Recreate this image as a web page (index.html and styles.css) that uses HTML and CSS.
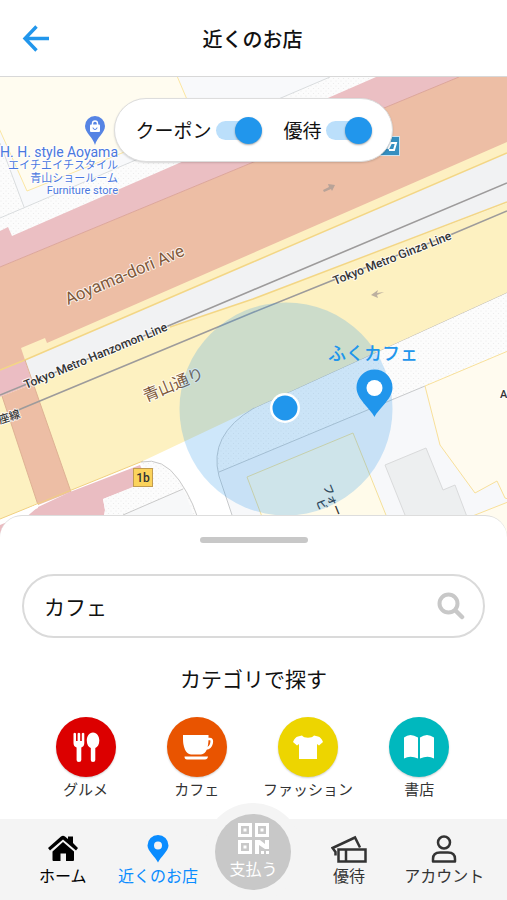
FILE: index.html
```html
<!DOCTYPE html>
<html lang="ja">
<head>
<meta charset="utf-8">
<meta name="viewport" content="width=device-width, initial-scale=1">
<title>近くのお店</title>
<link rel="stylesheet" href="styles.css">
</head>
<body>
<div class="app">
  <header class="header">
    <button class="back" type="button" aria-label="戻る">
      <svg viewBox="0 0 28 28" width="28" height="28"><path d="M14.500 2.500 3 14.500l11.500 12M3.500 14.500H27" fill="none" stroke="#2196ec" stroke-width="3.400"/></svg>
    </button>
    <h1 class="title">近くのお店</h1>
  </header>

  <main class="map">
    <svg class="map-art" viewBox="0 77 507 460" preserveAspectRatio="xMidYMin slice">
      <defs>
        <pattern id="dots" width="5" height="5" patternUnits="userSpaceOnUse">
          <rect width="5" height="5" fill="#fcfcfc"/>
          <circle cx="1" cy="1" r=".6" fill="#ebebeb"/><circle cx="3.500" cy="3.500" r=".6" fill="#ebebeb"/>
        </pattern>
      </defs>
      <rect y="77" width="507" height="460" fill="#fff"/>
      <!-- north-west blocks -->
      <path d="M0 77H376L0 245Z" fill="url(#dots)"/>
      <path d="M0 77H330L24 207 0 143Z" fill="#f8f9fb"/>
      <path d="M0 218 330 77M0 143 24 207" fill="none" stroke="#d9dcde"/>
      <path d="M-2 76H177L197 123 27 191-2 126Z" fill="#fffcf0" stroke="#fbe6a2"/>
      <!-- avenue -->
      <path d="M0 231 8 227 12 236 376 77H460L0 267Z" fill="#ebbfc3"/>
      <path d="M0 267 459 77H507V150L250 258 24 362 0 371Z" fill="#edbea5"/>
      <path d="M0 267 459 77" stroke="#dca69b"/>
      <path d="M0 370 25 360 33 384 0 397Z" fill="#ebbdc3"/>
      <path d="M21 348 45 338 47 343 253 253 507 142V153L253 262 25 360Z" fill="#fdf0c2"/>
      <!-- rail corridor -->
      <path d="M25 360 253 262 507 153V203L253 299 170 327 34 388Z" fill="#f1f2f3"/>
      <path d="M0 397 33 384 170 327 253 299 507 203V293L253 409 143 461 0 519Z" fill="#fdf1c1"/>
      <path d="M0 370 25 360 253 262 507 153M507 202 253 299 170 327" fill="none" stroke="#f3d685" stroke-width="1.500"/>
      <path d="M2 396 33 384 25 360 71 492 38 505Z" fill="#edbea5"/>
      <path d="M25 360 71 492M2 396 38 505" stroke="#dfb294"/>
      <path d="M0 395 168 326 253 290 507 183M0 418 23 408 254 312 331 281 450 235 507 211" fill="none" stroke="#9d9b9b" stroke-width="1.600"/>
      <path d="M0 519 143 461" stroke="#f0d080"/>
      <path d="M253 409 507 293" stroke="#bdb8ae"/>
      <!-- station entrance -->
      <path d="M38 507 70 492 140 465 148 482 103 499 105 510 102 525H17Z" fill="#eabdc2"/>
      <path d="M0 522 38 504 38 508 22 515 0 524Z" fill="#fff"/>
      <path d="M0 525 12 520 0 534Z" fill="#eabdc2"/>
      <path d="M141 463Q163 457 179 480T203 537H102L105 510 103 499 150 480Z" fill="url(#dots)"/>
      <path d="M123 515 183 489Q193 510 200 537H90Z" fill="#f7f8f9"/>
      <path d="M123 515 183 489M141 462Q163 457 179 480T201 530" fill="none" stroke="#c9c9c9"/>
      <!-- south-east blocks -->
      <path d="M253 409 507 293V352L425 386 219 472Q211 435 253 409Z" fill="url(#dots)"/>
      <path d="M219 472 425 386 507 352V537H238Z" fill="#f7f8fa"/>
      <path d="M254 408Q208 435 219 476L237 530M219 472 425 386" fill="none" stroke="#c7c9cb"/>
      <path d="M247 477 353 433 392 530H267Z" fill="#fffbea" stroke="#f4e09a"/>
      <path d="M425 386 508 351V499L505 498 497 481 475 493 440 445Z" fill="#fffbef" stroke="#f8e09a"/>
      <path d="M470 517 508 502V537Z" fill="#fffbef" stroke="#f8e09a"/>
      <path d="M385 465 426 448 443 490 455 485 472 530H411Z" fill="#edeff0" stroke="#d9dadb"/>
      <!-- direction arrows -->
      <path d="M323 190 329 187 328 184 335 185 332 191 331 189 324 192ZM384 292 377 293 378 290 371 295 378 298 377 295Z" fill="#a69a94" opacity=".75"/>
      <!-- road and line names -->
      <g class="halo">
        <text class="road" transform="translate(68 305) rotate(-23)" font-size="17">Aoyama-dori Ave</text>
        <text class="line" transform="translate(26 389) rotate(-22.500)" font-size="12">Tokyo Metro Hanzomon Line</text>
        <text class="line" transform="translate(335 285) rotate(-21.500)" font-size="12">Tokyo Metro Ginza Line</text>
        <text class="road" transform="translate(146 402) rotate(-22.500)" font-size="16">青山通り</text>
        <text class="line" transform="translate(0 424) rotate(-18)" font-size="11">座線</text>
        <text class="line" x="500" y="398" font-size="11">A</text>
      </g>
      <text class="line" transform="translate(323 486) rotate(68)" font-size="11">フォー</text>
      <text class="line" transform="translate(316 501) rotate(68)" font-size="11">ビ</text>
      <!-- station exit -->
      <rect x="133.500" y="468.500" width="19" height="18" fill="#fbd35c" stroke="#c29c50"/>
      <text x="143" y="482" text-anchor="middle" class="line" font-size="12">1b</text>
      <rect x="379.500" y="136.500" width="20" height="19" fill="#358fc0" stroke="#cfe2ed"/>
      <path d="M388 149 391 143H396L394 150H389" fill="none" stroke="#fff" stroke-width="2"/>
      <!-- shop marker -->
      <path d="M95 145C93 137 85 133 85 126A10 10 0 0 1 105 126C105 133 97 137 95 145Z" fill="#5684e4"/>
      <rect x="90" y="124.500" width="10" height="7.500" rx="1" fill="#fff"/>
      <path d="M92.500 125V123.500A2.500 2.500 0 0 1 97.500 123.500V125" fill="none" stroke="#fff" stroke-width="1.400"/>
      <path d="M93 127.500A2 2 0 0 0 97 127.500" fill="none" stroke="#5684e4"/>
      <g class="halo poi" text-anchor="end">
        <text x="118" y="157" font-size="14">H. H. style Aoyama</text>
        <text x="118" y="169" font-size="11">エイチエイチスタイル</text>
        <text x="118" y="182" font-size="11">青山ショールーム</text>
        <text x="118" y="194" font-size="11">Furniture store</text>
      </g>
      <!-- current position -->
      <circle cx="286" cy="409" r="106.500" fill="#2b96e8" opacity=".23"/>
      <circle cx="285" cy="408" r="15" fill="#fff"/>
      <circle cx="285" cy="408" r="12.500" fill="#2196ec"/>
      <path d="M374.500 417C370 408 356.500 399 356.500 387.500A18 18 0 0 1 392.500 387.500C392.500 399 379 408 374.500 417Z" fill="#2196ec"/>
      <circle cx="374.500" cy="388" r="8" fill="#fff"/>
      <text class="shop" x="373" y="360" text-anchor="middle" font-size="18">ふくカフェ</text>
    </svg>
    <div class="filters">
      <label class="filter">クーポン<input class="switch" type="checkbox" role="switch" checked></label>
      <label class="filter">優待<input class="switch" type="checkbox" role="switch" checked></label>
    </div>
  </main>

  <section class="sheet">
    <div class="handle"></div>
    <form class="search">
      <input class="search-input" type="text" value="カフェ" aria-label="お店を検索">
      <button class="search-button" type="button" aria-label="検索">
        <svg viewBox="0 0 28 28" width="28" height="28"><circle cx="11.500" cy="11.500" r="9" fill="none" stroke="#c8c8c8" stroke-width="4"/><path d="M18.500 18.500 25 25" stroke="#c8c8c8" stroke-width="4.500" stroke-linecap="round"/></svg>
      </button>
    </form>
    <h2 class="subtitle">カテゴリで探す</h2>
    <div class="categories">
      <a class="category" href="#gourmet">
        <span class="disc gourmet"><svg viewBox="0 0 60 60" width="60" height="60" fill="#fff"><path d="M17.500 16.500Q18.700 15 20 16.500V24H21.600V16.500Q22.900 15 24.200 16.500V24H25.800V16.500Q27.100 15 28.300 16.500V26Q28.300 29.500 25.300 30.500V43Q25.300 45 22.900 45T20.600 43V30.500Q17.500 29.500 17.500 26Z"/><path d="M37 15.500C41 15.500 43.300 19.500 43.300 23.500 43.300 27.500 41.600 30 39.300 31V43Q39.300 45 37 45T34.800 43V31C32.500 30 30.800 27.500 30.800 23.500 30.800 19.500 33 15.500 37 15.500Z"/></svg></span>
        グルメ
      </a>
      <a class="category" href="#cafe">
        <span class="disc cafe"><svg viewBox="0 0 60 60" width="60" height="60"><path d="M16 18H41.500V22C41.500 29 39.500 37.500 34 37.500H24C18.500 37.500 16 29 16 22Z" fill="#fff"/><path d="M41 22H43Q45.500 22 44.500 26.500 43.500 31 39 31.500" fill="none" stroke="#fff" stroke-width="2.700"/><path d="M17.500 39.500H41Q40.500 42.500 38 42.500H20Q17.500 42.500 17.500 39.500Z" fill="#fff"/></svg></span>
        カフェ
      </a>
      <a class="category" href="#fashion">
        <span class="disc fashion"><svg viewBox="0 0 60 60" width="60" height="60"><path d="M24 18.500C26 21.500 34 21.500 36 18.500L40 19.500Q43 20 45 25L41 28.500 39 27V42H21V27L19 28.500 15 25Q17 20 20 19.500Z" fill="#fff"/></svg></span>
        ファッション
      </a>
      <a class="category" href="#books">
        <span class="disc books"><svg viewBox="0 0 60 60" width="60" height="60" fill="#fff"><path d="M15 20.500Q21 15.500 29 20.500V41.500Q21 38 15 41.500ZM31 20.500Q38 15.500 45 20.500V41.500Q39 38 31 41.500Z"/></svg></span>
        書店
      </a>
    </div>
  </section>

  <nav class="nav">
    <a class="nav-item home" href="#home">
      <svg viewBox="0 0 32 28" width="32" height="28"><path d="M21 1.500H26V8L31 13 29 15.500 16 4.500 3 15.500 1 13 14 1.500Q16 0 18 1.500L21 4Z"/><path d="M16 7 27 16.500V25Q27 26 26 26H19V18.500H13.500V26H6.500Q5.500 26 5.500 25V16.500Z"/></svg>
      ホーム
    </a>
    <a class="nav-item near" href="#near">
      <svg viewBox="0 0 32 28" width="32" height="28"><path fill-rule="evenodd" d="M16 27.500C13.500 22 5.500 16 5.500 10.500A10.500 10.500 0 0 1 26.500 10.500C26.500 16 18.500 22 16 27.500ZM16 6.500A4 4 0 1 0 16 14.500 4 4 0 0 0 16 6.500Z"/></svg>
      近くのお店
    </a>
    <a class="pay" href="#pay">
      <svg viewBox="0 0 31 31" width="31" height="31" fill="none" stroke="#fff" stroke-width="3"><path d="M1.500 1.500H12.500V12.500H1.500ZM18.500 1.500H29.500V12.500H18.500ZM1.500 18.500H12.500V29.500H1.500Z"/><path d="M5.500 5.500H8.500V8.500H5.500ZM22.500 5.500H25.500V8.500H22.500ZM5.500 22.500H8.500V25.500H5.500ZM17 17H22L27 21V17H31V26H27L21 22V31H17ZM23 28H26V31H23ZM28 28H31V31H28Z" fill="#fff" stroke="none"/></svg>
      支払う
    </a>
    <a class="nav-item" href="#benefits">
      <svg viewBox="0 0 36 28" width="36" height="28" fill="none" stroke="#333" stroke-width="2.500"><path d="M4.500 20.500V17L1.500 13 24 2.500 29 12.500"/><path d="M7.500 14.500H34.500V26.500H7.500ZM15 14.500V26.500"/></svg>
      優待
    </a>
    <a class="nav-item" href="#account">
      <svg viewBox="0 0 32 28" width="32" height="28" fill="none" stroke="#333" stroke-width="2.500"><circle cx="16" cy="7.500" r="6"/><path d="M5 26.500V24Q5 17.500 12 17.500H20Q27 17.500 27 24V26.500Z" stroke-linejoin="round"/></svg>
      アカウント
    </a>
  </nav>
</div>
</body>
</html>
```
FILE: styles.css
```css
* {
  box-sizing: border-box;
}

body {
  margin: 0;
  font-family: "Noto Sans CJK JP", sans-serif;
  color: #111;
  background: #fff;
}

a {
  color: inherit;
  text-decoration: none;
}

button {
  border: 0;
  padding: 0;
  background: none;
  cursor: pointer;
}

svg {
  display: block;
}

.app {
  display: flex;
  flex-direction: column;
  min-height: 100vh;
}

.header {
  display: grid;
  grid-template-columns: 28px 1fr 28px;
  align-items: center;
  height: 77px;
  padding: 0 24px 0 22px;
  border-bottom: 1px solid #d8d8d8;
}

.title {
  margin: 2px 0 0;
  font-size: 20px;
  line-height: 28px;
  font-weight: 500;
  text-align: center;
}

.map {
  position: relative;
  flex: 1;
  display: flex;
  justify-content: center;
  align-items: flex-start;
  min-height: 300px;
  padding: 21px 16px;
  overflow: hidden;
}

.map-art {
  position: absolute;
  inset: 0;
  width: 100%;
  height: 100%;
}

.halo text {
  paint-order: stroke;
  stroke: #fff;
  stroke-opacity: 0.8;
  stroke-width: 2px;
  stroke-linejoin: round;
}

.road,
.line,
.poi {
  font-family: Roboto, "Noto Sans CJK JP", sans-serif;
}

.road {
  fill: #80593a;
}

.line {
  fill: #333;
  font-weight: 500;
}

.poi {
  fill: #4a78df;
}

.shop {
  fill: #2196ec;
  font-weight: 500;
}

.filters {
  position: relative;
  display: flex;
  gap: 22px;
  align-items: center;
  height: 64px;
  padding: 0 20px;
  border: 1px solid #ddd;
  border-radius: 32px;
  background: #fff;
  box-shadow: 0 1px 2px rgba(0, 0, 0, 0.15);
}

.filter {
  display: flex;
  align-items: center;
  gap: 4px;
  font-size: 19px;
  line-height: 28px;
}

.switch {
  appearance: none;
  display: flex;
  align-items: center;
  width: 46px;
  height: 28px;
  margin: 0;
}

.switch::before {
  content: "";
  width: 40px;
  height: 19px;
  border-radius: 10px;
  background: #bbdffb;
}

.switch::after {
  content: "";
  width: 27px;
  height: 27px;
  margin-left: -21px;
  border-radius: 50%;
  background: #2196ec;
  box-shadow: 0 1px 2px rgba(0, 0, 0, 0.35);
}

.sheet {
  position: relative;
  margin-top: -22px;
  padding: 21px 22px 18px;
  border-top: 1px solid #ddd;
  border-radius: 22px 22px 0 0;
  background: #fff;
}

.handle {
  width: 108px;
  height: 6px;
  margin: 0 auto 31px;
  border-radius: 3px;
  background: #c8c8c8;
}

.search {
  display: flex;
  align-items: center;
  height: 64px;
  padding: 0 18px 0 20px;
  border: 2px solid #dadada;
  border-radius: 32px;
}

.search-input {
  flex: 1;
  min-width: 0;
  padding: 0;
  border: 0;
  outline: 0;
  background: none;
  color: #111;
  font: 21px/32px "Noto Sans CJK JP", sans-serif;
}

.subtitle {
  margin: 24px 0 23px;
  font-size: 21px;
  line-height: 32px;
  font-weight: 400;
  text-align: center;
}

.categories {
  display: grid;
  grid-template-columns: repeat(4, 1fr);
  margin: 0 10px 0 8px;
}

.category {
  display: flex;
  flex-direction: column;
  align-items: center;
  font-size: 15px;
  line-height: 24px;
  color: #333;
  white-space: nowrap;
}

.disc {
  width: 60px;
  height: 60px;
  border-radius: 50%;
  box-shadow: 0 1px 2px rgba(0, 0, 0, 0.2);
}

.gourmet {
  background: #dc0000;
}

.cafe {
  background: #e95400;
}

.fashion {
  background: #edd500;
}

.books {
  background: #00b8be;
}

.nav {
  position: relative;
  display: grid;
  grid-template-columns: repeat(5, 1fr);
  height: 81px;
  padding: 0 15px;
  background: #f4f4f4;
}

.nav-item {
  display: flex;
  flex-direction: column;
  align-items: center;
  padding-top: 16px;
  font-size: 16px;
  line-height: 24px;
  color: #333;
  white-space: nowrap;
}

.home {
  color: #000;
}

.near {
  color: #0a8cff;
  fill: currentColor;
}

.pay {
  display: flex;
  flex-direction: column;
  align-items: center;
  justify-self: center;
  gap: 2px;
  width: 76px;
  height: 76px;
  margin-top: -5px;
  padding-top: 9px;
  border-radius: 50%;
  background: #c8c8c8;
  box-shadow: 0 0 0 11px #f4f4f4, 0 1px 3px rgba(0, 0, 0, 0.2);
  color: #fff;
  font-size: 16px;
  line-height: 24px;
}
```
